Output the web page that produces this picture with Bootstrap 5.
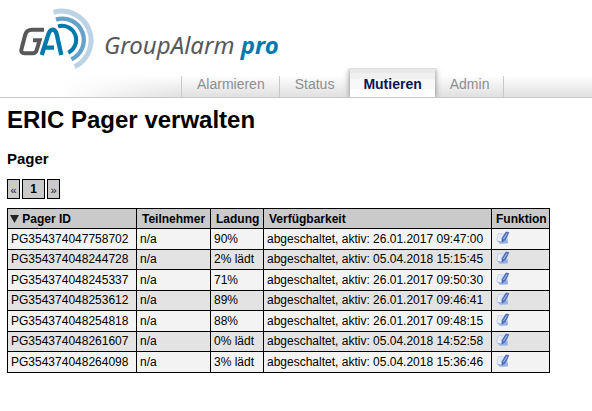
<!DOCTYPE html>
<html lang="de">
<head>
<meta charset="utf-8">
<meta name="viewport" content="width=device-width, initial-scale=1">
<title>GroupAlarm pro</title>
<link href="https://cdn.jsdelivr.net/npm/bootstrap@5.3.0/dist/css/bootstrap.min.css" rel="stylesheet">
<style>
body { font-family: "Liberation Sans", Arial, sans-serif; font-size: 12px; line-height: 16px; color: #000; background: #fff; }
.brand-area { height: 69px; }
.brand-logo { width: 100px; height: 70px; flex: none; }
.brand-name { font: italic 24px/30px "Noto Sans", "Open Sans", sans-serif; margin: 30px 0 0 4px; color: #58585a; }
.brand-name strong { color: #0079ad; }
.main-tabs { height: 29px; padding-left: 181px; border-bottom: 1px solid #c8c8c8; background: linear-gradient(90deg, #fff 60px, #fff0 180px), linear-gradient(#fff 6px, #e0e0e0); }
.main-tabs .nav-link { height: 21px; padding: 0 14px 0 15px; font-size: 14px; line-height: 17px; color: #8e8e8e; border-radius: 0; }
.main-tabs .sep-start { border-left: 1px solid #c8c8c8; }
.main-tabs .sep-end { border-right: 1px solid #c8c8c8; }
.main-tabs .nav-link.active { height: 29px; margin-left: 2px; padding: 7px 13px 0; color: #0a1560; font-weight: bold; background: linear-gradient(#e9e9e9 4px, #f0f0f0 4px 10px, #f8f8f8 10px 20px, #fff 20px); box-shadow: 0 1px 6px #7c7c7c; clip-path: inset(0 -8px 0 -8px); border-top: 1px solid #dcdcdc; }
.page-area { padding-left: 7px; }
.page-title { font-size: 24px; line-height: 28px; margin: 8px 0 16px; font-weight: bold; }
.section-title { font-size: 15px; line-height: 18px; margin: 0 0 11px; font-weight: bold; }
.page-steps { gap: 2px; margin-bottom: 9px; }
.page-step { width: 13px; height: 20px; padding: 0; border: 1px solid #000; background: #cacaca; color: #000; font-size: 11px; line-height: 20px; text-align: center; border-radius: 0; }
.page-step:disabled { color: #222; }
.page-step.current { width: 23px; font-size: 12px; line-height: 18px; font-weight: bold; }
.pager-table { width: 543px; max-width: 100%; table-layout: fixed; border-collapse: collapse; color: #000; white-space: nowrap; }
.pager-table th, .pager-table td { border: 1px solid #000; height: 21px; padding: 1px 3px 0; line-height: 17px; vertical-align: middle; }
.pager-table th { background: #cacaca; height: 20px; padding: 1px 4px 0 5px; }
.pager-table th:first-child { padding-left: 2px; }
.pager-table th:last-child { padding-left: 4px; }
.pager-table td { background: #f3f3f3; }
.pager-table tbody tr:nth-child(even) td { background: #e3e3e3; height: 20px; padding-top: 0; }
.col-id { width: 129px; } .col-person { width: 74px; } .col-charge { width: 53px; } .col-state { width: 228px; }
.edit-btn { display: block; margin: 0 0 3px 1px; padding: 0; border: 0; background: none; height: 14px; line-height: 0; }
.edit-btn svg { display: block; }
</style>
</head>
<body>
<svg class="d-none" aria-hidden="true">
  <symbol id="edit" viewBox="0 0 14 14">
    <path d="M2.500 2.500 11 3.500 11.500 12 4 12.500 .8 9.500Z" fill="#edf2fc" stroke="#b7c8ea" stroke-width=".8"/>
    <path d="M1 9.500 5 10.500 11.500 8 11.800 12.300 4 12.600Z" fill="#93aee2"/>
    <path d="M4 5h3.500M3.500 7h2.500" stroke="#c9d5ef"/>
    <path d="M10 1 12.800 1.500 9.500 8.500 6 11 6 7.500Z" fill="#5675c0" stroke="#3c5aa5" stroke-width=".7"/>
    <path d="M11 2.500 7.500 8" stroke="#a8c0f0"/>
  </symbol>
</svg>
<header>
  <div class="brand-area d-flex">
    <svg class="brand-logo" viewBox="0 0 300 210" fill="none" aria-hidden="true">
      <path d="M161 37A87.700 87.700 0 0 1 224 200" stroke="#bcd3e6" stroke-width="15"/>
      <path d="M168 59A63.900 63.900 0 0 1 214 178" stroke="#65a2ca" stroke-width="13"/>
      <path d="M174 79A42.600 42.600 0 0 1 205 158" stroke="#0079ad" stroke-width="12"/>
      <path d="M132 89H96Q80 89 76 103L65 145Q60 160 75 160H99Q107 160 110 150L119 121H99" stroke="#58585a" stroke-width="12"/>
      <path d="M125 165 145 103Q150 89 158 89Q166 89 170 102L184 165M136 143H162" stroke="#0079ad" stroke-width="13"/>
    </svg>
    <div class="brand-name text-nowrap">GroupAlarm <strong>pro</strong></div>
  </div>
  <nav class="main-tabs nav flex-nowrap align-items-end" aria-label="Hauptmenü">
    <a class="nav-link sep-start sep-end" href="#">Alarmieren</a>
    <a class="nav-link" href="#">Status</a>
    <a class="nav-link active" href="#" aria-current="page">Mutieren</a>
    <a class="nav-link sep-end" href="#">Admin</a>
  </nav>
</header>
<main class="page-area">
  <h1 class="page-title">ERIC Pager verwalten</h1>
  <h2 class="section-title">Pager</h2>
  <div class="page-steps d-flex">
    <button class="page-step" type="button" disabled>«</button>
    <button class="page-step current" type="button">1</button>
    <button class="page-step" type="button" disabled>»</button>
  </div>
  <table class="pager-table">
    <colgroup><col class="col-id"><col class="col-person"><col class="col-charge"><col class="col-state"><col></colgroup>
    <thead><tr><th><svg width="9" height="8" viewBox="0 0 9 8" aria-hidden="true"><path d="M0 0H9L4.500 8Z" fill="#222"/></svg> Pager ID</th><th>Teilnehmer</th><th>Ladung</th><th>Verfügbarkeit</th><th>Funktion</th></tr></thead>
    <tbody>
      <tr><td>PG354374047758702</td><td>n/a</td><td>90%</td><td>abgeschaltet, aktiv: 26.01.2017 09:47:00</td><td><button class="edit-btn" type="button" aria-label="Bearbeiten"><svg width="14" height="14"><use href="#edit"/></svg></button></td></tr>
      <tr><td>PG354374048244728</td><td>n/a</td><td>2% lädt</td><td>abgeschaltet, aktiv: 05.04.2018 15:15:45</td><td><button class="edit-btn" type="button" aria-label="Bearbeiten"><svg width="14" height="14"><use href="#edit"/></svg></button></td></tr>
      <tr><td>PG354374048245337</td><td>n/a</td><td>71%</td><td>abgeschaltet, aktiv: 26.01.2017 09:50:30</td><td><button class="edit-btn" type="button" aria-label="Bearbeiten"><svg width="14" height="14"><use href="#edit"/></svg></button></td></tr>
      <tr><td>PG354374048253612</td><td>n/a</td><td>89%</td><td>abgeschaltet, aktiv: 26.01.2017 09:46:41</td><td><button class="edit-btn" type="button" aria-label="Bearbeiten"><svg width="14" height="14"><use href="#edit"/></svg></button></td></tr>
      <tr><td>PG354374048254818</td><td>n/a</td><td>88%</td><td>abgeschaltet, aktiv: 26.01.2017 09:48:15</td><td><button class="edit-btn" type="button" aria-label="Bearbeiten"><svg width="14" height="14"><use href="#edit"/></svg></button></td></tr>
      <tr><td>PG354374048261607</td><td>n/a</td><td>0% lädt</td><td>abgeschaltet, aktiv: 05.04.2018 14:52:58</td><td><button class="edit-btn" type="button" aria-label="Bearbeiten"><svg width="14" height="14"><use href="#edit"/></svg></button></td></tr>
      <tr><td>PG354374048264098</td><td>n/a</td><td>3% lädt</td><td>abgeschaltet, aktiv: 05.04.2018 15:36:46</td><td><button class="edit-btn" type="button" aria-label="Bearbeiten"><svg width="14" height="14"><use href="#edit"/></svg></button></td></tr>
    </tbody>
  </table>
</main>
<script src="https://cdn.jsdelivr.net/npm/bootstrap@5.3.0/dist/js/bootstrap.bundle.min.js"></script>
</body>
</html>
